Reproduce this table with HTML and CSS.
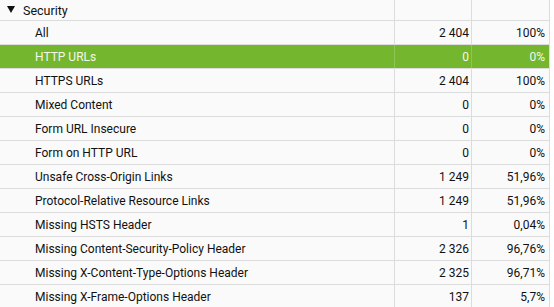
FILE: index.html
```html
<!DOCTYPE html>
<html>
<head>
<meta charset="utf-8">
<link rel="stylesheet" href="styles.css">
</head>
<body>
<div class="table">
  <div class="row head">
    <div class="cell name"><span class="caret"></span>Security</div>
    <div class="cell num"></div>
    <div class="cell pct"></div>
  </div>
  <div class="row"><div class="cell name sub">All</div><div class="cell num">2 404</div><div class="cell pct">100%</div></div>
  <div class="row selected"><div class="cell name sub">HTTP URLs</div><div class="cell num">0</div><div class="cell pct">0%</div></div>
  <div class="row"><div class="cell name sub">HTTPS URLs</div><div class="cell num">2 404</div><div class="cell pct">100%</div></div>
  <div class="row"><div class="cell name sub">Mixed Content</div><div class="cell num">0</div><div class="cell pct">0%</div></div>
  <div class="row"><div class="cell name sub">Form URL Insecure</div><div class="cell num">0</div><div class="cell pct">0%</div></div>
  <div class="row"><div class="cell name sub">Form on HTTP URL</div><div class="cell num">0</div><div class="cell pct">0%</div></div>
  <div class="row"><div class="cell name sub">Unsafe Cross-Origin Links</div><div class="cell num">1 249</div><div class="cell pct">51,96%</div></div>
  <div class="row"><div class="cell name sub">Protocol-Relative Resource Links</div><div class="cell num">1 249</div><div class="cell pct">51,96%</div></div>
  <div class="row"><div class="cell name sub">Missing HSTS Header</div><div class="cell num">1</div><div class="cell pct">0,04%</div></div>
  <div class="row"><div class="cell name sub">Missing Content-Security-Policy Header</div><div class="cell num">2 326</div><div class="cell pct">96,76%</div></div>
  <div class="row"><div class="cell name sub">Missing X-Content-Type-Options Header</div><div class="cell num">2 325</div><div class="cell pct">96,71%</div></div>
  <div class="row"><div class="cell name sub">Missing X-Frame-Options Header</div><div class="cell num">137</div><div class="cell pct">5,7%</div></div>
</div>
</body>
</html>
```
FILE: styles.css
```css
html, body {
  margin: 0;
  padding: 0;
  background: #ffffff;
  height: 307px;
  overflow: hidden;
}
.table {
  width: 550px;
  background: #fafafa;
  font-family: Roboto, "Liberation Sans", sans-serif;
  font-size: 12px;
  color: #111111;
  border-right: 1px solid #dcdcdc;
  box-sizing: border-box;
}
.row {
  display: grid;
  grid-template-columns: 395px 77px 77px;
  height: 24px;
  border-bottom: 1px solid #dcdcdc;
  box-sizing: border-box;
}
.row.head {
  height: 21px;
}
.cell {
  display: flex;
  align-items: center;
  white-space: nowrap;
  box-sizing: border-box;
}
.name {
  border-right: 1px solid #dcdcdc;
  padding-left: 23px;
}
.name.sub {
  padding-left: 35px;
}
.num {
  border-right: 1px solid #dcdcdc;
  justify-content: flex-end;
  padding-right: 2px;
}
.pct {
  justify-content: flex-end;
  padding-right: 4px;
}
.head .name {
  position: relative;
  font-size: 12.5px;
}
.caret {
  position: absolute;
  left: 7px;
  top: 6px;
  width: 0;
  height: 0;
  border-left: 4px solid transparent;
  border-right: 4px solid transparent;
  border-top: 7px solid #111111;
}
.row.selected {
  background: #74b62e;
  color: #f2f8ea;
}
.row.selected .name,
.row.selected .num {
  border-right-color: #8fc557;
}
```
